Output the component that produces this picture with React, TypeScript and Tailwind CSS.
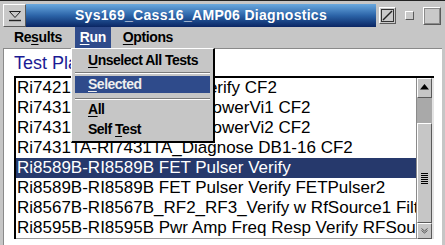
import React from 'react';

const rows = [
  'Ri7421B-RI7421B Amp Verify CF2',
  'Ri7431A-RI7431A Peak PowerVi1 CF2',
  'Ri7431A-RI7431A Peak PowerVi2 CF2',
  'Ri7431TA-RI7431TA_Diagnose DB1-16 CF2',
  'Ri8589B-RI8589B FET Pulser Verify',
  'Ri8589B-RI8589B FET Pulser Verify FETPulser2',
  'Ri8567B-RI8567B_RF2_RF3_Verify w RfSource1 Filter',
  'Ri8595B-RI8595B Pwr Amp Freq Resp Verify RFSource',
];

const SELECTED = 4;

const Bevel: React.FC<{ className?: string; children?: React.ReactNode }> = ({ className = '', children }) => (
  <div className={`border-t border-l border-t-white border-l-white border-b border-r border-b-[#5a5a5a] border-r-[#5a5a5a] ${className}`}>
    {children}
  </div>
);

export default function App() {
  return (
    <div className="w-[445px] h-[245px] bg-[#c6c6c6] overflow-hidden relative font-['Liberation_Sans',Arial,sans-serif] text-black">
      <div className="h-[1px] bg-[#222]" />

      {/* title bar */}
      <div className="flex items-stretch h-[26px] pt-[3px] pl-[3px] pr-[2px]">
        <Bevel className="w-[23px] bg-[#c9c9c9] flex items-center justify-center">
          <svg width="14" height="14" viewBox="0 0 14 14">
            <path d="M1.5 2.5 H12.5 L7 8.5 Z" fill="none" stroke="#222" strokeWidth="1" />
            <path d="M1 11.5 H13" stroke="#222" strokeWidth="1.4" />
          </svg>
        </Bevel>
        <div className="w-[350px] bg-gradient-to-b from-[#6aaae0] via-[#2c64a8] to-[#0b2664] flex items-center justify-center text-white font-bold text-[14px] tracking-[0.3px]">
          Sys169_Cass16_AMP06 Diagnostics
        </div>
        <div className="flex-1 flex items-center justify-between pl-[3px] pr-[2px]">
          <Bevel className="w-[17px] h-[17px] bg-[#c9c9c9] flex items-center justify-center">
            <svg width="13" height="13" viewBox="0 0 13 13">
              <rect x="0.5" y="0.5" width="12" height="12" fill="none" stroke="#333" />
              <path d="M2 11 L11 2" stroke="#222" strokeWidth="1.4" />
            </svg>
          </Bevel>
          <Bevel className="w-[9px] h-[9px] bg-[#c9c9c9]" />
          <Bevel className="w-[18px] h-[18px] bg-[#c9c9c9]">
            <div className="w-full h-full border border-[#8a8a8a]" />
          </Bevel>
        </div>
      </div>

      {/* menu bar */}
      <div className="flex items-center h-[21px] pl-[14px] text-[14px] font-bold tracking-[-0.4px]">
        <span>Re<u className="underline-offset-2">s</u>ults</span>
        <span className="ml-[13px] h-full flex items-center px-[5px] bg-[#2f4b8b] text-white">
          <u className="underline-offset-2">R</u>un
        </span>
        <span className="ml-[12px]">
          <u className="underline-offset-2">O</u>ptions
        </span>
      </div>

      {/* content */}
      <div className="mx-[3px] h-[200px] bg-white border-l border-t border-[#8a8a8a] pl-[10px] pr-[8px]">
        <div className="h-[27px] pt-[3px] text-[18px] leading-[22px] text-[#1b1b94]">Test Plans</div>
        <div className="flex border-t-[2px] border-l-[2px] border-t-black border-l-black">
          <div className="flex-1 min-w-0 bg-white border-b border-[#9a9a9a]">
            {rows.map((r, i) => (
              <div
                key={i}
                className={`h-[20px] pl-[1px] text-[17px] leading-[20px] whitespace-nowrap overflow-hidden ${
                  i === SELECTED ? 'bg-[#26396c] text-white' : ''
                }`}
              >
                {r}
              </div>
            ))}
          </div>
          <div className="w-[18px] flex flex-col bg-[#a9a9a9] border-l border-[#8a8a8a] border-r-2 border-r-[#e4e4e4]">
            <Bevel className="h-[20px] bg-[#c6c6c6] flex items-start justify-center pt-[5px]">
              <svg width="9" height="6" viewBox="0 0 9 6">
                <path d="M0 5.5 L4.5 0 L9 5.5 Z" fill="#000" />
              </svg>
            </Bevel>
            <div className="h-[25px]" />
            <Bevel className="flex-1 bg-[#c6c6c6] flex items-center justify-center">
              <div className="flex flex-col gap-[1px] pt-[10px]">
                {[0, 1, 2, 3, 4, 5].map((k) => (
                  <div key={k} className="w-[7px] h-[1px] bg-black" />
                ))}
              </div>
            </Bevel>
            <Bevel className="h-[16px] bg-[#c6c6c6] flex items-center justify-center">
              <svg width="7" height="6" viewBox="0 0 7 6">
                <path d="M0.5 0.5 L3.5 3 L6.5 0.5 M0.5 2.5 L3.5 5 L6.5 2.5" fill="none" stroke="#555" strokeWidth="1" />
              </svg>
            </Bevel>
          </div>
        </div>
      </div>

      {/* Run dropdown */}
      <div className="absolute left-[71px] top-[48px] w-[144px] h-[95px] bg-[#c6c6c6] border-t border-l border-t-white border-l-white border-r-2 border-b-2 border-r-black border-b-black text-[14px] font-bold tracking-[-0.5px] flex flex-col px-[3px]">
        <div className="h-[23px] flex items-center pl-[13px]">
          <span><u className="underline-offset-2">U</u>nselect All Tests</span>
        </div>
        <div className="h-[1px] bg-[#7a7a7a]" />
        <div className="h-[1px] bg-white mb-[2px]" />
        <div className="h-[17px] flex items-center pl-[13px] bg-[#2f4b8b] text-[#eeeeee]">
          <span><u className="underline-offset-2">S</u>elected</span>
        </div>
        <div className="h-[5px]" />
        <div className="h-[1px] bg-[#7a7a7a]" />
        <div className="h-[1px] bg-white" />
        <div className="h-[20px] flex items-end pl-[13px]">
          <span><u className="underline-offset-2">A</u>ll</span>
        </div>
        <div className="h-[18px] flex items-center pl-[13px]">
          <span>Self <u className="underline-offset-2">T</u>est</span>
        </div>
      </div>
    </div>
  );
}
